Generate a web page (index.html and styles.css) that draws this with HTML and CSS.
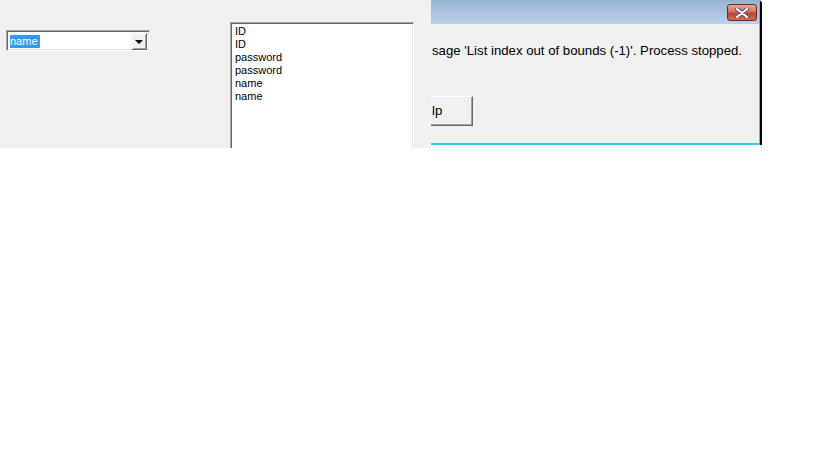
FILE: index.html
```html
<!DOCTYPE html>
<html lang="en">
<head>
    <meta charset="UTF-8">
    <title>List index out of bounds</title>
    <link rel="stylesheet" href="styles.css">
</head>
<body>
    <div class="screen">
        <div class="app">
            <div class="combo">
                <div class="combo-field"><span class="selected">name</span></div>
                <div class="combo-btn"><span class="arrow"></span></div>
            </div>
            <div class="listbox">
                <div class="item">ID</div>
                <div class="item">ID</div>
                <div class="item">password</div>
                <div class="item">password</div>
                <div class="item">name</div>
                <div class="item">name</div>
            </div>
        </div>

        <div class="dialog">
            <div class="dialog-inner">
                <div class="titlebar">
                    <div class="close-btn">
                        <svg width="14" height="10" viewBox="0 0 14 10">
                            <path d="M2 1 L12 9 M12 1 L2 9" stroke="#555" stroke-width="4" stroke-linecap="round"/>
                            <path d="M2 1 L12 9 M12 1 L2 9" stroke="#fff" stroke-width="2.2" stroke-linecap="round"/>
                        </svg>
                    </div>
                </div>
                <div class="message">sage 'List index out of bounds (-1)'. Process stopped.</div>
                <div class="help-btn">lp</div>
            </div>
        </div>
    </div>
</body>
</html>
```

FILE: styles.css
```css
body {
    margin: 0;
    background: #fff;
    font-family: "Liberation Sans", Arial, sans-serif;
}

.screen {
    display: flex;
    align-items: flex-start;
}

/* left application window */
.app {
    width: 431px;
    height: 148px;
    background: #f0f0f0;
    display: flex;
    align-items: flex-start;
    overflow: hidden;
}

.combo {
    display: flex;
    width: 144px;
    height: 21px;
    margin: 30px 0 0 6px;
    box-sizing: border-box;
    border-top: 1px solid #a0a0a0;
    border-left: 1px solid #a0a0a0;
    border-right: 1px solid #fff;
    border-bottom: 1px solid #fff;
    box-shadow: inset 1px 1px 0 #696969, inset -1px -1px 0 #e3e3e3;
    background: #fff;
    padding: 2px;
}

.combo-field {
    flex: 1;
    font-size: 11px;
    line-height: 13px;
    padding: 2px 0 0 1px;
}

.selected {
    background: #3399ff;
    color: #fff;
    display: inline-block;
    padding-right: 1px;
    border-right: 1px solid #c97a2a;
}

.combo-btn {
    width: 16px;
    height: 17px;
    box-sizing: border-box;
    background: #f0f0f0;
    border-top: 1px solid #f0f0f0;
    border-left: 1px solid #f0f0f0;
    border-right: 1px solid #696969;
    border-bottom: 1px solid #696969;
    box-shadow: inset 1px 1px 0 #fff, inset -1px -1px 0 #a0a0a0;
    display: flex;
    align-items: center;
    justify-content: center;
}

.arrow {
    width: 0;
    height: 0;
    border-left: 4px solid transparent;
    border-right: 4px solid transparent;
    border-top: 4px solid #000;
}

.listbox {
    width: 184px;
    height: 200px;
    margin: 22px 0 0 80px;
    box-sizing: border-box;
    background: #fff;
    border-top: 1px solid #a0a0a0;
    border-left: 1px solid #a0a0a0;
    border-right: 1px solid #fff;
    box-shadow: inset 1px 1px 0 #696969, inset -1px 0 0 #e3e3e3;
    padding: 2px 0 0 4px;
    font-size: 11px;
    line-height: 13px;
    color: #000;
}

/* error dialog behind the app */
.dialog {
    width: 331px;
    height: 145px;
    box-sizing: border-box;
    border-right: 2px solid #000;
    border-top-right-radius: 4px;
    background: #f0f0f0;
}

.dialog-inner {
    height: 145px;
    box-sizing: border-box;
    border-right: 1px solid #3cc8ec;
    border-bottom: 2px solid #3cc8ec;
    overflow: hidden;
}

.titlebar {
    height: 24px;
    background: linear-gradient(#98b3d1, #bad2eb);
    display: flex;
    justify-content: flex-end;
    align-items: flex-start;
    padding-right: 2px;
}

.close-btn {
    width: 30px;
    height: 17px;
    margin-top: 4px;
    box-sizing: border-box;
    border: 1px solid #6e2a24;
    border-radius: 3px;
    background: linear-gradient(#e6a79c 0%, #d0735f 45%, #c3412e 55%, #d56a52 100%);
    display: flex;
    align-items: center;
    justify-content: center;
}

.message {
    margin-top: 19px;
    font-size: 13.2px;
    line-height: 16px;
    color: #000;
    white-space: nowrap;
    padding-left: 1px;
}

.help-btn {
    width: 42px;
    height: 30px;
    margin-top: 37px;
    box-sizing: border-box;
    border-top: 1px solid #fff;
    border-right: 1px solid #696969;
    border-bottom: 1px solid #696969;
    box-shadow: inset -1px -1px 0 #a0a0a0;
    font-size: 13.2px;
    line-height: 27px;
    padding-left: 1px;
    color: #000;
}
```
